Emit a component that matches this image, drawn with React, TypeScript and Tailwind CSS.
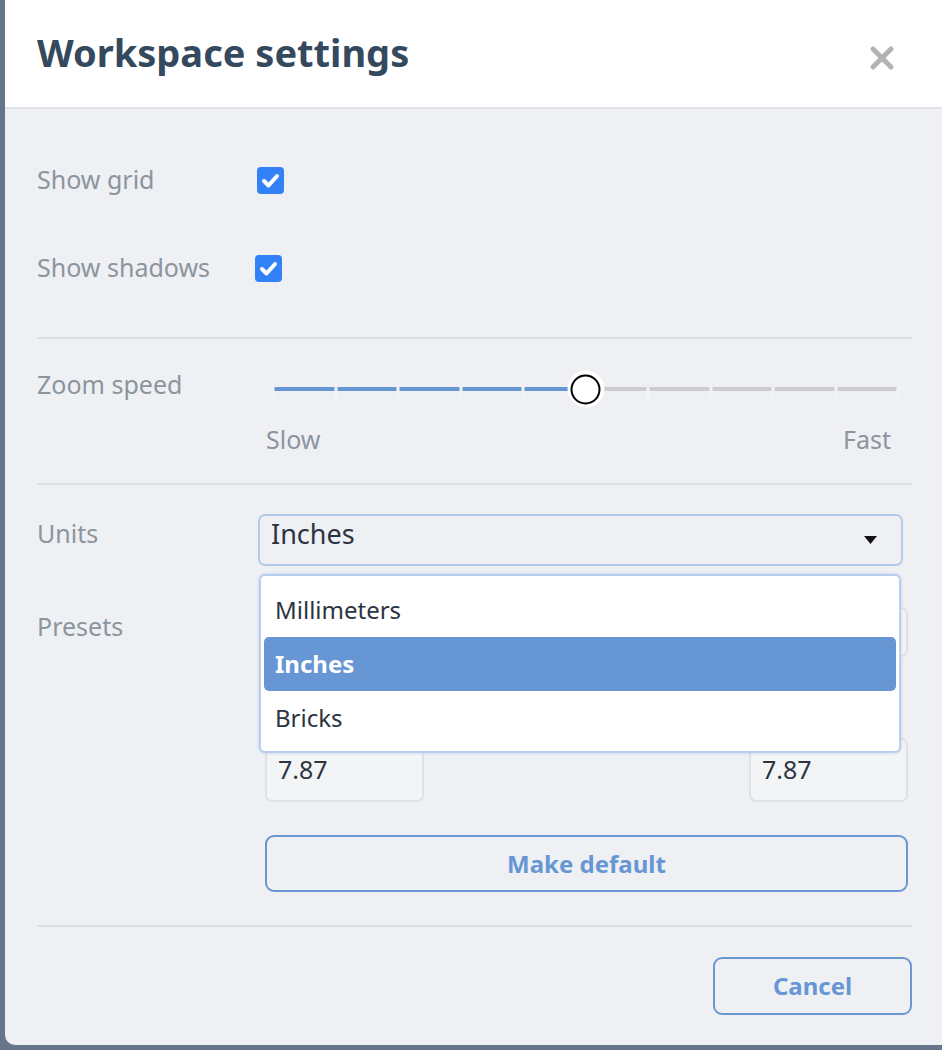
import React from "react";

function Checkbox() {
  return (
    <div className="w-[27px] h-[27px] rounded-[4px] bg-[#3381f6] flex items-center justify-center">
      <svg width="27" height="27" viewBox="0 0 27 27">
        <path d="M7 14 L11.5 18.5 L20 9" fill="none" stroke="#ffffff" strokeWidth="4" strokeLinecap="round" strokeLinejoin="round" />
      </svg>
    </div>
  );
}

function Slider() {
  const ticks = Array.from({ length: 11 }, (_, i) => i);
  const value = 50;
  return (
    <div className="relative w-[625px] h-[40px] ml-[15px]">
      <div className="absolute left-0 right-0 top-[18px] h-[4px] flex">
        <div className="h-full bg-[#6796d4]" style={{ width: `${value}%` }} />
        <div className="h-full flex-1 bg-[#cdcdcd]" />
      </div>
      {ticks.map((t) => (
        <div
          key={t}
          className="absolute top-[18px] w-[3px] h-[13px] bg-[#f2f3f5] -translate-x-1/2"
          style={{ left: `${t * 10}%` }}
        />
      ))}
      <div
        className="absolute top-[20px] w-[37px] h-[37px] rounded-full bg-white -translate-x-1/2 -translate-y-1/2 flex items-center justify-center"
        style={{ left: `${value}%` }}
      >
        <div className="w-[30px] h-[30px] rounded-full border-2 border-black bg-white" />
      </div>
    </div>
  );
}

export default function App() {
  return (
    <div className="h-[1050px] w-[942px] bg-[#66758a] pl-[5px] pb-[5px] flex font-['Noto_Sans',sans-serif]">
      <div className="flex-1 bg-[#eef0f4] rounded-bl-[10px] flex flex-col overflow-hidden">
        <header className="h-[109px] shrink-0 bg-white border-b-2 border-[#dfe2e6] flex items-center justify-between pl-[32px] pr-[47px]">
          <h1 className="text-[38px] font-bold text-[#34495e] leading-none -mt-[4px]">Workspace settings</h1>
          <svg width="26" height="26" viewBox="0 0 26 26" className="mt-[8px]">
            <path d="M4 4 L22 22 M22 4 L4 22" stroke="#b3b3b3" strokeWidth="5" strokeLinecap="round" />
          </svg>
        </header>

        <div className="pl-[32px] pr-[30px] flex flex-col">
          {/* Section 1 */}
          <div className="mt-[43px] h-[56px] flex items-center">
            <div className="w-[220px] text-[25px] text-[#8c959e]">Show grid</div>
            <Checkbox />
          </div>
          <div className="mt-[32px] h-[56px] flex items-center">
            <div className="w-[218px] text-[25px] text-[#8c959e]">Show shadows</div>
            <Checkbox />
          </div>
          <div className="mt-[41px] h-[2px] bg-[#dcdfe3]" />

          {/* Section 2 */}
          <div className="mt-[18px] flex items-start">
            <div className="w-[221px] h-[56px] flex items-center text-[25px] text-[#8c959e]">Zoom speed</div>
            <div className="flex-1 flex flex-col pt-[12px]">
              <Slider />
              <div className="mt-[15px] h-[32px] flex items-center justify-between pl-[8px] pr-[21px] text-[25px] text-[#8c959e]">
                <span>Slow</span>
                <span>Fast</span>
              </div>
            </div>
          </div>
          <div className="mt-[27px] h-[2px] bg-[#dcdfe3]" />

          {/* Section 3 */}
          <div className="mt-[29px] flex items-start">
            <div className="w-[221px] h-[40px] flex items-center text-[25px] text-[#8c959e]">Units</div>
            <div className="relative">
              <div className="w-[645px] h-[52px] rounded-[7px] border-2 border-[#b4cbee] bg-[#eef0f4] pl-[11px] pr-[24px] flex items-center justify-between">
                <span className="text-[27px] text-[#2b3440] -mt-[11px]">Inches</span>
                <svg width="13" height="8" viewBox="0 0 13 8">
                  <path d="M0 0 L13 0 L6.5 8 Z" fill="#111111" />
                </svg>
              </div>
              {/* Dropdown menu (overlay) */}
              <div className="absolute z-10 top-[60px] left-[1px] w-[642px] h-[179px] bg-white border-2 border-[#b9cff0] rounded-[6px] shadow-[0_0_3px_rgba(120,160,220,0.45)] pt-[7px] px-[3px] flex flex-col">
                <div className="h-[54px] flex items-center pl-[11px] text-[24px] text-[#2b3440]">Millimeters</div>
                <div className="h-[54px] flex items-center pl-[11px] text-[24px] font-bold text-white bg-[#6796d4] rounded-[5px]">Inches</div>
                <div className="h-[54px] flex items-center pl-[11px] text-[24px] text-[#2b3440]">Bricks</div>
              </div>
            </div>
          </div>

          <div className="mt-[41px] flex items-start">
            <div className="w-[228px] text-[25px] text-[#8c959e] leading-[38px]">Presets</div>
            <div className="flex flex-col">
              <div className="w-[643px] h-[50px] rounded-[7px] border-2 border-[#dfe1e5] bg-[#f3f4f6]" />
              <div className="mt-[24px] h-[32px]" />
              <div className="mt-[25px] flex justify-between">
                <div className="w-[159px] h-[64px] rounded-[7px] border-2 border-[#dfe1e5] bg-[#f3f4f6] pl-[11px] flex items-center text-[25px] text-[#2b3440]">7.87</div>
                <div className="w-[159px] h-[64px] rounded-[7px] border-2 border-[#dfe1e5] bg-[#f3f4f6] pl-[11px] flex items-center text-[25px] text-[#2b3440]">7.87</div>
              </div>
              <button className="mt-[33px] w-[643px] h-[57px] rounded-[9px] border-2 border-[#6a97d4] text-[24px] font-bold text-[#6796d4] flex items-center justify-center">
                Make default
              </button>
            </div>
          </div>

          <div className="mt-[33px] h-[2px] bg-[#dcdfe3]" />
          <div className="mt-[30px] flex justify-end">
            <button className="w-[199px] h-[58px] rounded-[9px] border-2 border-[#6a97d4] text-[24px] font-bold text-[#6796d4] flex items-center justify-center">
              Cancel
            </button>
          </div>
        </div>
      </div>
    </div>
  );
}
